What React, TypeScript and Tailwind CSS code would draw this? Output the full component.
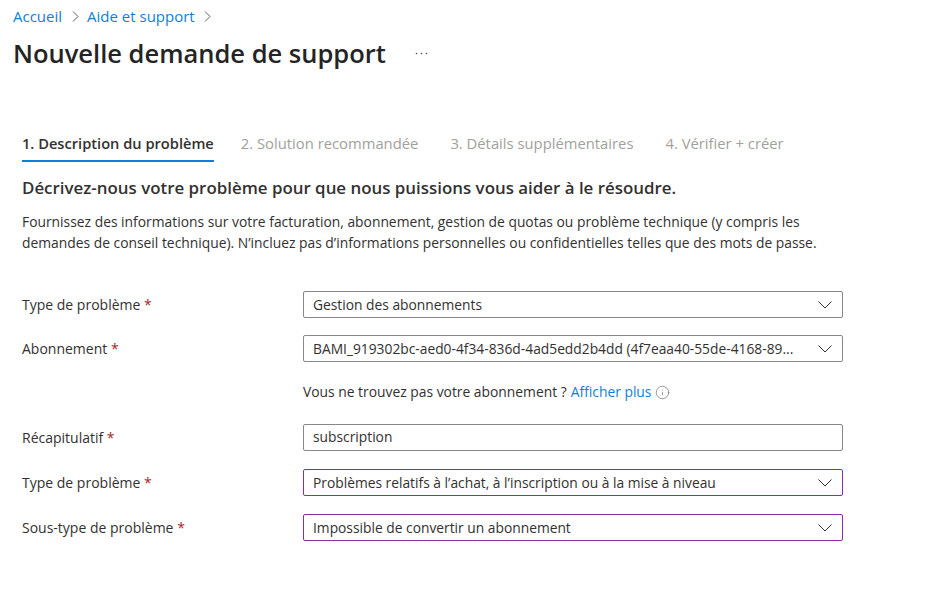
import { Info } from "lucide-react";

const Chevron = () => (
  <svg width="14" height="8" viewBox="0 0 14 8" fill="none" stroke="#323130" strokeWidth="1" className="shrink-0">
    <path d="M0.5 0.5 L7 7 L13.5 0.5" />
  </svg>
);

const Crumb = () => (
  <svg width="7" height="11" viewBox="0 0 7 11" fill="none" stroke="#605e5c" strokeWidth="1" className="shrink-0">
    <path d="M1 0.5 L6 5.5 L1 10.5" />
  </svg>
);

const Label = ({ text }: { text: string }) => (
  <div className="w-[281px] text-[14px] text-[#323130]">
    {text} <span className="text-[#a4262c]">*</span>
  </div>
);

const Field = ({ label, value, purple }: { label: string; value: string; purple?: boolean }) => (
  <div className="flex items-center h-[27px]">
    <Label text={label} />
    <div
      className={`w-[540px] h-[27px] flex items-center justify-between pl-[9px] pr-[10px] border rounded-[2px] text-[13.8px] text-[#323130] ${
        purple ? "border-[#8a2da5]" : "border-[#8a8886]"
      }`}
    >
      <span className="whitespace-nowrap pt-px">{value}</span>
      <Chevron />
    </div>
  </div>
);

export default function App() {
  return (
    <div className="w-[946px] h-[615px] bg-white overflow-hidden font-['Open_Sans','Noto_Sans',sans-serif] text-[#323130]">
      <div className="pl-[13px] pt-[6px] flex items-center text-[15px] leading-[20px] text-[#0f7fd6]">
        <span>Accueil</span>
        <span className="ml-[10px] mr-[8px]"><Crumb /></span>
        <span>Aide et support</span>
        <span className="ml-[9px]"><Crumb /></span>
      </div>
      <div className="pl-[13px] mt-[11px] flex items-center">
        <h1 className="text-[25.5px] leading-[32px] font-semibold text-[#242424]">Nouvelle demande de support</h1>
        <svg width="13" height="3" viewBox="0 0 13 3" fill="#484644" className="ml-[29px]">
          <circle cx="1.5" cy="1.5" r="0.8" />
          <circle cx="6.5" cy="1.5" r="0.8" />
          <circle cx="11.5" cy="1.5" r="0.8" />
        </svg>
      </div>
      <div className="pl-[22px] mt-[58px] flex text-[14.8px] leading-[32px] text-[#a19f9d]">
        <div className="font-semibold text-[14.65px] text-[#323130] border-b-2 border-[#0f7fd6] h-[35px] whitespace-nowrap">1. Description du problème</div>
        <div className="ml-[27px] whitespace-nowrap">2. Solution recommandée</div>
        <div className="ml-[32px] whitespace-nowrap">3. Détails supplémentaires</div>
        <div className="ml-[32px] whitespace-nowrap">4. Vérifier + créer</div>
      </div>
      <div className="pl-[22px]">
        <h2 className="mt-[15px] text-[16.9px] leading-[22px] font-semibold whitespace-nowrap">
          Décrivez-nous votre problème pour que nous puissions vous aider à le résoudre.
        </h2>
        <p className="mt-[12px] text-[13.85px] leading-[21px] w-[830px]">
          Fournissez des informations sur votre facturation, abonnement, gestion de quotas ou problème technique (y compris les demandes de conseil technique). N’incluez pas d’informations personnelles ou confidentielles telles que des mots de passe.
        </p>
        <div className="mt-[38px] flex flex-col gap-[17px]">
          <Field label="Type de problème" value="Gestion des abonnements" />
          <Field label="Abonnement" value="BAMI_919302bc-aed0-4f34-836d-4ad5edd2b4dd (4f7eaa40-55de-4168-89..." />
        </div>
        <div className="ml-[281px] mt-[20px] h-[20px] flex items-center text-[13.85px] whitespace-nowrap">
          Vous ne trouvez pas votre abonnement ? <span className="ml-[4px] text-[#0f7fd6]">Afficher plus</span>
          <Info size={15} strokeWidth={1} className="ml-[4px] text-[#605e5c]" />
        </div>
        <div className="mt-[22px] flex items-center h-[27px]">
          <Label text="Récapitulatif" />
          <div className="w-[540px] h-[27px] flex items-center pl-[9px] border border-[#8a8886] rounded-[2px] text-[13.8px]">subscription</div>
        </div>
        <div className="mt-[18px] flex flex-col gap-[18px]">
          <Field purple label="Type de problème" value="Problèmes relatifs à l’achat, à l’inscription ou à la mise à niveau" />
          <Field purple label="Sous-type de problème" value="Impossible de convertir un abonnement" />
        </div>
      </div>
    </div>
  );
}
